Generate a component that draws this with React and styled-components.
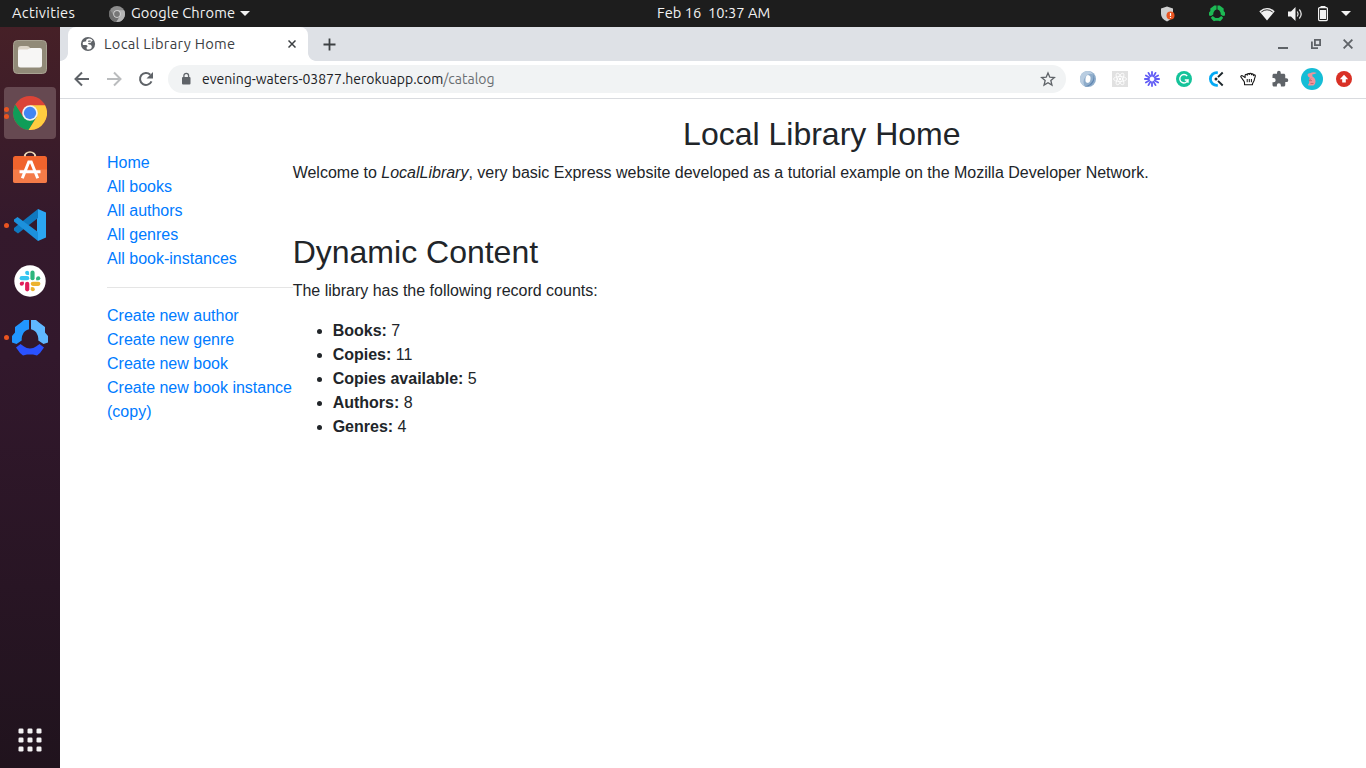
import React from "react";
import styled, { createGlobalStyle } from "styled-components";

const Global = createGlobalStyle`
  * { box-sizing: border-box; }
  html, body, #root { height: 100%; margin: 0; }
  body { overflow: hidden; background: #fff; }
  svg { display: block; flex: none; }
`;

const uiFont = `Ubuntu, "Noto Sans", "Open Sans", sans-serif`;

const Desktop = styled.div`
  display: grid;
  grid-template-rows: 27px 1fr;
  grid-template-columns: 60px 1fr;
  height: 100vh;
`;

/* ---------- top panel ---------- */
const Panel = styled.header`
  grid-column: 1 / -1;
  display: grid;
  grid-template-columns: 657px auto 1fr;
  align-items: center;
  background: #1d1d1d;
  color: #f2f2f2;
  font-family: ${uiFont};
  font-size: 14.67px;
  line-height: 25px;
  white-space: pre;
`;
const PanelLeft = styled.div`
  display: flex;
  align-items: center;
  padding-left: 12px;
`;
const PanelText = styled.span`
  letter-spacing: ${(p) => p.$track || 0}px;
  width: ${(p) => p.$w}px;
  padding-bottom: 2px;
`;
const AppMenu = styled.div`
  display: flex;
  align-items: center;
  gap: 6px;
  margin-left: 34px;
`;
const PanelRight = styled.div`
  display: flex;
  align-items: center;
  justify-content: flex-end;
  padding-right: 15px;
`;
const Tray = styled.span`
  margin-left: ${(p) => p.$gap}px;
`;

/* ---------- dock ---------- */
const Dock = styled.nav`
  display: flex;
  flex-direction: column;
  align-items: center;
  gap: 4px;
  padding: 4px 0 2px;
  background: linear-gradient(#462027 0, #3d1d29 90px, #34192c 200px, #32182c 330px, #281524 560px, #20131d 100%);
`;
const DockItem = styled.div`
  position: relative;
  display: flex;
  align-items: center;
  justify-content: center;
  width: 52px;
  height: 52px;
  border-radius: 4px;
  background: ${(p) => (p.$active ? "#664951" : "transparent")};
  margin-top: ${(p) => (p.$last ? "auto" : 0)};
`;
const Dots = styled.div`
  position: absolute;
  left: 0;
  top: 0;
  height: 100%;
  display: flex;
  flex-direction: column;
  justify-content: center;
  gap: 2px;
`;
const Dot = styled.i`
  width: 5px;
  height: 5px;
  border-radius: 50%;
  background: #e95420;
`;

/* ---------- browser ---------- */
const Browser = styled.main`
  display: flex;
  flex-direction: column;
  min-width: 0;
`;
const TabStrip = styled.div`
  display: flex;
  align-items: center;
  height: 34px;
  padding: 0 13px 0 8px;
  background: #dee1e6;
`;
const Tab = styled.div`
  position: relative;
  display: flex;
  align-items: center;
  width: 240px;
  height: 34px;
  padding: 0 12px;
  background: #fff;
  border-radius: 8px 8px 0 0;
  &::before, &::after {
    content: "";
    position: absolute;
    bottom: 0;
    width: 8px;
    height: 8px;
  }
  &::before { left: -8px; background: radial-gradient(circle at 0 0, #dee1e6 7.5px, #fff 8.2px); }
  &::after { right: -8px; background: radial-gradient(circle at 100% 0, #dee1e6 7.5px, #fff 8.2px); }
`;
const TabTitle = styled.span`
  flex: 1;
  margin-left: 8px;
  color: #3c4043;
  font: 14.67px/20px ${uiFont};
  letter-spacing: 0.3px;
  white-space: nowrap;
`;
const NewTab = styled.div`
  margin-left: 15px;
`;
const WindowButtons = styled.div`
  display: flex;
  align-items: center;
  gap: 22px;
  margin-left: auto;
`;
const Toolbar = styled.div`
  display: flex;
  align-items: center;
  height: 38px;
  padding: 0 14px 1px;
  border-bottom: 1px solid #d9dbdf;
  background: #fff;
`;
const NavButtons = styled.div`
  display: flex;
  gap: 16px;
`;
const AddressBar = styled.div`
  display: flex;
  align-items: center;
  flex: 1;
  height: 28px;
  margin: 0 14px;
  padding: 0 10px 0 12px;
  border-radius: 14px;
  background: #f1f3f4;
`;
const Url = styled.span`
  flex: 1;
  margin-left: 10px;
  color: #202124;
  font: 14px/20px ${uiFont};
`;
const UrlPath = styled.span`
  color: #6b6f73;
`;
const Extensions = styled.div`
  display: flex;
  align-items: center;
`;
const Extension = styled.span`
  display: flex;
  align-items: center;
  justify-content: center;
  width: 32px;
  &:first-child { width: 16px; margin-right: 8px; }
  &:last-child { width: 16px; margin-left: 8px; }
`;

/* ---------- page ---------- */
const Page = styled.div`
  display: flex;
  flex: 1;
  padding: 16px 15px 0 47px;
  background: #fff;
  color: #212529;
  font: 16px/24px "Liberation Sans", Arial, sans-serif;
`;
const Sidebar = styled.aside`
  width: 185.66px;
  padding-top: 36px;
`;
const LinkList = styled.ul`
  margin: 0;
  padding: 0;
  list-style: none;
`;
const NavLink = styled.a`
  color: #007bff;
  text-decoration: none;
`;
const Divider = styled.hr`
  margin: 16px 0;
  border: 0;
  border-top: 1px solid rgba(0, 0, 0, 0.1);
`;
const Content = styled.section`
  flex: 1;
`;
const Heading = styled.h1`
  margin: ${(p) => p.$top || 0}px 0 8px;
  font-size: 32px;
  font-weight: 400;
  line-height: 38.4px;
  text-align: ${(p) => (p.$center ? "center" : "left")};
`;
const Paragraph = styled.p`
  margin: 0 0 16px;
`;
const Counts = styled.ul`
  margin: 0;
  padding-left: 40px;
`;

/* ---------- drawings ---------- */
const FilesIcon = () => (
  <svg width="34" height="34" viewBox="0 0 34 34">
    <rect x=".5" y=".5" width="33" height="33" rx="4" fill="#918a78" stroke="#a8a292" />
    <path d="M5 9q0-3 3-3h6q2 0 3 2v4H5z" fill="#dcd5c8" />
    <path d="M5 11q0-1.500 1.500-1.500h8l3-1.500H27q2 0 2 2v15q0 2.500-2.500 2.500h-19Q5 27.500 5 25z" fill="#f7f6f5" />
  </svg>
);
const ChromeIcon = ({ size = 34, mono }) => {
  const c = mono ? ["#8d8d8d", "#6f6f6f", "#b5b5b5", "#777", "#ddd"] : ["#db4437", "#0f9d58", "#ffcd40", "#4285f4", "#f1f1f1"];
  return (
    <svg width={size} height={size} viewBox="0 0 48 48">
      <circle cx="24" cy="24" r="24" fill={c[0]} />
      <path d="M3.200 12A24 24 0 0 0 22 47.900L33.500 29.500 24 35 14.500 29.500z" fill={c[1]} />
      <path d="M24 13h21.300A24 24 0 0 1 22 47.900L33.500 29.500z" fill={c[2]} />
      <circle cx="24" cy="24" r="11" fill={c[4]} />
      <circle cx="24" cy="24" r="8.700" fill={c[3]} />
    </svg>
  );
};
const SoftwareIcon = () => (
  <svg width="34" height="36" viewBox="0 0 34 36">
    <path d="M11.500 7V5.500a5.500 4.500 0 0 1 11 0V7" fill="none" stroke="#e9d3ae" strokeWidth="1.700" />
    <rect y="5" width="34" height="27" rx="2.500" fill="#f0642d" />
    <path d="M0 18.500h34v11q0 2.500-2.500 2.500h-29Q0 32 0 29.500z" fill="#f47b48" />
    <path d="M12 5.500q0-2.500 2-3.500M22 5.500q0-2.500-2-3.500" fill="none" stroke="#f5e6c8" strokeWidth="1" />
    <path d="M9.300 27.300 15.800 11h2.400l6.500 16.300M6.500 20.700h21" fill="none" stroke="#fff" strokeWidth="3" />
  </svg>
);
const CodeIcon = () => (
  <svg width="32" height="32" viewBox="0 0 32 32">
    <path d="M24 0 32 3.500v25L24 32l-1-8V8z" fill="#2ba6f2" />
    <path d="M24 0v9L4 24.500 0 21.500V19z" fill="#0f78bf" />
    <path d="M0 10.500 3.500 8 24 23v9L0 12.500z" fill="#1c91dc" />
  </svg>
);
const SlackIcon = () => (
  <svg width="32" height="32" viewBox="0 0 32 32">
    <circle cx="16" cy="16" r="15.700" fill="#fff" />
    <g strokeWidth="4.200" strokeLinecap="round">
      <path d="M18.500 7.700v5.500" stroke="#2eb67d" />
      <path d="M7.700 13.200h5.500" stroke="#36c5f0" />
      <path d="M13.200 18.800v5.500" stroke="#e01e5a" />
      <path d="M18.800 18.800h5.500" stroke="#ecb22e" />
    </g>
    <circle cx="13.100" cy="7.800" r="2" fill="#36c5f0" />
    <path d="M12.500 8h2.600v2h-2.600z" fill="#36c5f0" />
    <circle cx="24.300" cy="13.200" r="2" fill="#2eb67d" />
    <path d="M22.200 12.700h2v2.600h-2z" fill="#2eb67d" />
    <circle cx="7.700" cy="18.700" r="2" fill="#e01e5a" />
    <path d="M7.800 16.700h2v2.500h-2z" fill="#e01e5a" />
    <circle cx="18.800" cy="24.300" r="2" fill="#ecb22e" />
    <path d="M16.800 22.200h2.500v2h-2.500z" fill="#ecb22e" />
  </svg>
);
const RingIcon = ({ size = 36, colors = ["#2196ff", "#5fb8ff", "#2a52ff"] }) => (
  <svg width={size} height={size * 37 / 36} viewBox="0 0 36 37">
    <path d="M17 1v9.300q-4.500 1.200-6 4.700-1.500 2.500-1.300 4.500v2L4.500 25 0 23.500V17l3-3.500V8l6-4.500L12 1z" fill={colors[0]} />
    <path d="M19 1v9.300q4.500 1.200 6 4.700 1.500 2.500 1.300 4.500v2l5.200 3.500 4.500-1.500V17l-3-3.500V8l-6-4.500L24 1z" fill={colors[1]} />
    <path d="m4 28.500 4.500-3.500 3.500 2.500q2.500 2 6 2t6-2l3.500-2.500 4.500 3.500-4 5.500-3 2.500-4-1h-6l-4 1L8 34z" fill={colors[2]} />
  </svg>
);
const AppsIcon = () => (
  <svg width="24" height="24" viewBox="0 0 24 24" fill="#f4f2f3">
    {[0.5, 9.5, 18.5].map((y) => [0.5, 9.5, 18.5].map((x) => <rect key={`${x}-${y}`} x={x} y={y} width="5" height="5" rx="1.300" />))}
  </svg>
);
const Caret = ({ w = 10 }) => (
  <svg width={w} height="5" viewBox="0 0 10 5"><path d="M0 0h10L5 5z" fill="#f2f2f2" /></svg>
);
const ShieldIcon = () => (
  <svg width="14" height="16" viewBox="0 0 14 16">
    <path d="M6 .5 12 2.500V8q0 5-6 7.500Q0 12.500 0 8V2.500z" fill="#cfcfcf" />
    <circle cx="9.500" cy="9.500" r="4" fill="#e95420" />
    <path d="M9.500 7v3M9.500 11v1" stroke="#fff" strokeWidth="1.200" />
  </svg>
);
const WifiIcon = () => (
  <svg width="16" height="14" viewBox="0 0 16 14">
    <path d="M.3 4.200Q8-2.400 15.700 4.200L8 13.500z" fill="#f2f2f2" />
    <path d="M2.300 5Q8 .6 13.700 5" fill="none" stroke="#1d1d1d" strokeWidth=".9" />
  </svg>
);
const SoundIcon = () => (
  <svg width="16" height="14" viewBox="0 0 16 14">
    <path d="M0 4.500h3L7.500 0v14L3 9.500H0z" fill="#f2f2f2" />
    <path d="M9.300 4.500q1.600 2.500 0 5M11.300 2.500q3.800 4.500 0 9" fill="none" stroke="#ddd" strokeWidth="1.300" />
  </svg>
);
const BatteryIcon = () => (
  <svg width="10" height="16" viewBox="0 0 10 16">
    <path d="M2.500 0h5v2h-5z" fill="#f2f2f2" />
    <rect x=".6" y="1.600" width="8.800" height="13" rx="1" fill="none" stroke="#f2f2f2" strokeWidth="1.200" />
    <path d="M2 4h6v9H2z" fill="#f2f2f2" />
  </svg>
);
const GlobeIcon = () => (
  <svg width="16" height="16" viewBox="0 0 16 16">
    <circle cx="8" cy="8" r="7.100" fill="#5f6368" />
    <path d="M9 2.600C6.500 3 5.800 4 6.300 5.300L3 6q-.7 2 0 3h3.200q1.500.3 1.300 1.700l-1 .8.300 1.800q3 .7 4.700-1l.3-2.300-1.500-1.500H8.800L8 7l3-.3.6-1.500 1.300-.4Q11.500 2.600 9 2.600z" fill="#fff" />
    <path d="M8.500 4.600h2.200v1.100H7.800zM2.300 9.500l2 .8 1 2.500-1.300-.6z" fill="#5f6368" />
  </svg>
);
const BackIcon = ({ color = "#5f6368", flip }) => (
  <svg width="16" height="16" viewBox="0 0 16 16">
    <path d={flip ? "M1 8h12.500M8 1.500 14.500 8 8 14.500" : "M15 8H2.500M8 1.500 1.500 8 8 14.500"} fill="none" stroke={color} strokeWidth="2" />
  </svg>
);
const ReloadIcon = () => (
  <svg width="16" height="16" viewBox="0 0 16 16">
    <path d="M13.500 10.400A6 6 0 1 1 12.300 3.700" fill="none" stroke="#5f6368" strokeWidth="2" />
    <path d="M15 1v6.500H8.500z" fill="#5f6368" />
  </svg>
);
const LockIcon = () => (
  <svg width="12" height="14" viewBox="0 0 12 14">
    <rect x="2" y="5" width="8.500" height="7.500" rx="1" fill="#5f6368" />
    <path d="M3.900 5.500V3.700a2.350 2.350 0 0 1 4.700 0v1.800" fill="none" stroke="#5f6368" strokeWidth="1.300" />
  </svg>
);
const StarIcon = () => (
  <svg width="16" height="16" viewBox="0 0 24 24">
    <path d="m12 3 2.700 6.300 6.800.6-5.200 4.500 1.600 6.600-5.900-3.500L6.100 21l1.600-6.600-5.200-4.500 6.800-.6z" fill="none" stroke="#5f6368" strokeWidth="2" />
  </svg>
);
const ExtRing = () => (
  <svg width="16" height="16" viewBox="0 0 16 16">
    <circle cx="8" cy="8" r="8" fill="#8fadcb" />
    <path d="M8 0a8 8 0 0 0-3.500 15.200Q1.500 8 8 3.500 10.500 2 13 3.200 11 0 8 0z" fill="#b9cde1" />
    <path d="M13 3.200Q15 9 9.500 13.500 7 15 4.500 15.200A8 8 0 0 0 13 3.200z" fill="#6086b1" />
    <ellipse cx="8" cy="8" rx="2.500" ry="3.900" transform="rotate(8 8 8)" fill="#fff" />
  </svg>
);
const ExtReact = () => (
  <svg width="16" height="16" viewBox="0 0 16 16">
    <path d="M0 0h16v16H0z" fill="#e1e1e1" />
    <g fill="none" stroke="#fff" strokeWidth=".8">
      {[0, 60, 120].map((a) => <ellipse key={a} cx="8" cy="8" rx="6.500" ry="2.500" transform={`rotate(${a} 8 8)`} />)}
    </g>
    <circle cx="8" cy="8" r="1.200" fill="#fff" />
  </svg>
);
const ExtBurst = () => (
  <svg width="16" height="16" viewBox="0 0 16 16" stroke="#625df5" strokeWidth="1.800" strokeLinecap="round">
    {Array.from({ length: 12 }, (_, i) => <path key={i} d="M8 4.900V.9" transform={`rotate(${i * 30} 8 8)`} />)}
  </svg>
);
const ExtGreen = () => (
  <svg width="16" height="16" viewBox="0 0 16 16">
    <circle cx="8" cy="8" r="8" fill="#15c39a" />
    <path d="M11.200 5A4.200 4.200 0 1 0 12 9H8.800M12 9v2.800" fill="none" stroke="#fff" strokeWidth="1.400" />
  </svg>
);
const ExtClock = () => (
  <svg width="16" height="16" viewBox="0 0 16 16">
    <path d="M9.800 1.800A6.300 6.300 0 1 0 9.800 14.200" fill="none" stroke="#03a9f4" strokeWidth="2.800" />
    <path d="m10 6.200 4.700-4.700M10 9.800l4.700 4.700" stroke="#1d272c" strokeWidth="1.900" />
    <circle cx="8" cy="8" r="1.500" fill="#1d272c" />
  </svg>
);
const ExtHand = () => (
  <svg width="16" height="16" viewBox="0 0 16 16">
    <path d="M4.600 13.800h7.800c0-2.200 1.600-3 1.900-5 .1-1.300.9-2.600 1-3.800.1-1.300-1.500-1.500-1.900-.3V4c0-1.400-1.800-1.500-2-.2v-.6c-.1-1.300-1.900-1.300-2.100 0v.3c-.2-1.200-2-1.200-2.100.1v.6C7 3 5.200 3 5.100 4.300v2.300L2.700 4.900C1.500 4.200.3 5.200 1.100 6.300l3 4c.5.9.5 2.200.5 3.500z" fill="#fff" stroke="#111" strokeWidth="1.100" strokeLinejoin="round" />
    <path d="M7.200 8v3.200m2.100-3.200v3.200m2.100-3.200v3.200" stroke="#111" strokeWidth="1" />
  </svg>
);
const PuzzleIcon = () => (
  <svg width="18" height="18" viewBox="0 0 24 24" fill="#5f6368">
    <path d="M20.500 11H19V7c0-1.100-.9-2-2-2h-4V3.500a2.500 2.500 0 0 0-5 0V5H4c-1.100 0-2 .9-2 2v3.800h1.500a2.700 2.700 0 0 1 0 5.400H2V20c0 1.100.9 2 2 2h3.800v-1.500a2.700 2.700 0 0 1 5.400 0V22H17c1.100 0 2-.9 2-2v-4h1.500a2.500 2.500 0 0 0 0-5z" />
  </svg>
);
const AvatarIcon = () => (
  <svg width="22" height="22" viewBox="0 0 22 22">
    <circle cx="11" cy="11" r="11" fill="#16bdd6" />
    <path d="M6.500 6.800Q6.700 5 9 5.300q3.500-1.800 6.800-.3-2.500 1.300-4.600 1.600l.3 1.900q3.200 1.800 3 5.500-.2 2.500-2 3.500H7.200Q6.500 16.500 8.200 15q-.8-3 .6-5.200-2.200-.9-2.300-3z" fill="#f0949b" />
    <path d="m10 10.500-2 2.300 3-.2M9.500 15.500h3" fill="none" stroke="#b9656d" strokeWidth=".9" />
  </svg>
);
const UpdateIcon = () => (
  <svg width="16" height="16" viewBox="0 0 16 16">
    <circle cx="8" cy="8" r="8" fill="#d93025" />
    <path d="m8 3.800 4.200 4.400H9.800v3.300H6.200V8.200H3.800z" fill="#fff" />
  </svg>
);
const CloseIcon = ({ size = 8, color = "#3c4043", weight = 1.5 }) => (
  <svg width={size} height={size} viewBox="0 0 8 8"><path d="m.5.500 7 7m0-7-7 7" stroke={color} strokeWidth={weight} /></svg>
);
const PlusIcon = () => (
  <svg width="13" height="13" viewBox="0 0 13 13"><path d="M6.500.500v12M.5 6.500h12" stroke="#3c4043" strokeWidth="1.800" /></svg>
);
const MinimizeIcon = () => (
  <svg width="11" height="10" viewBox="0 0 11 10"><path d="M0 8h10v2H0z" fill="#5f6368" /></svg>
);
const RestoreIcon = () => (
  <svg width="10" height="10" viewBox="0 0 10 10" fill="none" stroke="#5f6368" strokeWidth="1.800"><path d="M3.900.9h5.200v5.200H3.900zM.9 2.500v6.600H7" /></svg>
);

const dockItems = [
  { id: "files", icon: <FilesIcon />, dots: 0 },
  { id: "chrome", icon: <ChromeIcon />, dots: 2, active: true },
  { id: "software", icon: <SoftwareIcon />, dots: 0 },
  { id: "code", icon: <CodeIcon />, dots: 1 },
  { id: "slack", icon: <SlackIcon />, dots: 0 },
  { id: "ring", icon: <RingIcon />, dots: 1 },
];
const extensions = [ExtRing, ExtReact, ExtBurst, ExtGreen, ExtClock, ExtHand, PuzzleIcon, AvatarIcon, UpdateIcon];
const browseLinks = ["Home", "All books", "All authors", "All genres", "All book-instances"];
const createLinks = ["Create new author", "Create new genre", "Create new book", "Create new book instance (copy)"];
const counts = [["Books", 7], ["Copies", 11], ["Copies available", 5], ["Authors", 8], ["Genres", 4]];

const Links = ({ items }) => (
  <LinkList>{items.map((t) => <li key={t}><NavLink>{t}</NavLink></li>)}</LinkList>
);

export default function App() {
  return (
    <Desktop>
      <Global />
      <Panel>
        <PanelLeft>
          <PanelText $w={63} $track={0.3}>Activities</PanelText>
          <AppMenu>
            <ChromeIcon size={16} mono />
            <PanelText $w={103} $track={0.1}>Google Chrome</PanelText>
            <Caret />
          </AppMenu>
        </PanelLeft>
        <PanelText $w={113}>Feb 16  10:37 AM</PanelText>
        <PanelRight>
          <ShieldIcon />
          <Tray $gap={34}><RingIcon size={16} colors={["#1db954", "#1db954", "#1db954"]} /></Tray>
          <Tray $gap={34}><WifiIcon /></Tray>
          <Tray $gap={13}><SoundIcon /></Tray>
          <Tray $gap={14}><BatteryIcon /></Tray>
          <Tray $gap={13}><Caret /></Tray>
        </PanelRight>
      </Panel>
      <Dock>
        {dockItems.map((d) => (
          <DockItem key={d.id} $active={d.active}>
            <Dots>{Array.from({ length: d.dots }, (_, i) => <Dot key={i} />)}</Dots>
            {d.icon}
          </DockItem>
        ))}
        <DockItem $last><AppsIcon /></DockItem>
      </Dock>
      <Browser>
        <TabStrip>
          <Tab>
            <GlobeIcon />
            <TabTitle>Local Library Home</TabTitle>
            <CloseIcon size={8} />
          </Tab>
          <NewTab><PlusIcon /></NewTab>
          <WindowButtons>
            <MinimizeIcon />
            <RestoreIcon />
            <CloseIcon size={10} color="#5f6368" />
          </WindowButtons>
        </TabStrip>
        <Toolbar>
          <NavButtons>
            <BackIcon />
            <BackIcon color="#babcbe" flip />
            <ReloadIcon />
          </NavButtons>
          <AddressBar>
            <LockIcon />
            <Url>evening-waters-03877.herokuapp.com<UrlPath>/catalog</UrlPath></Url>
            <StarIcon />
          </AddressBar>
          <Extensions>
            {extensions.map((Icon, i) => <Extension key={i}><Icon /></Extension>)}
          </Extensions>
        </Toolbar>
        <Page>
          <Sidebar>
            <Links items={browseLinks} />
            <Divider />
            <Links items={createLinks} />
          </Sidebar>
          <Content>
            <Heading $center>Local Library Home</Heading>
            <Paragraph>
              Welcome to <em>LocalLibrary</em>, very basic Express website developed as a tutorial example on the Mozilla Developer Network.
            </Paragraph>
            <Heading $top={47.4}>Dynamic Content</Heading>
            <Paragraph>The library has the following record counts:</Paragraph>
            <Counts>
              {counts.map(([label, n]) => <li key={label}><strong>{label}:</strong> {n}</li>)}
            </Counts>
          </Content>
        </Page>
      </Browser>
    </Desktop>
  );
}
